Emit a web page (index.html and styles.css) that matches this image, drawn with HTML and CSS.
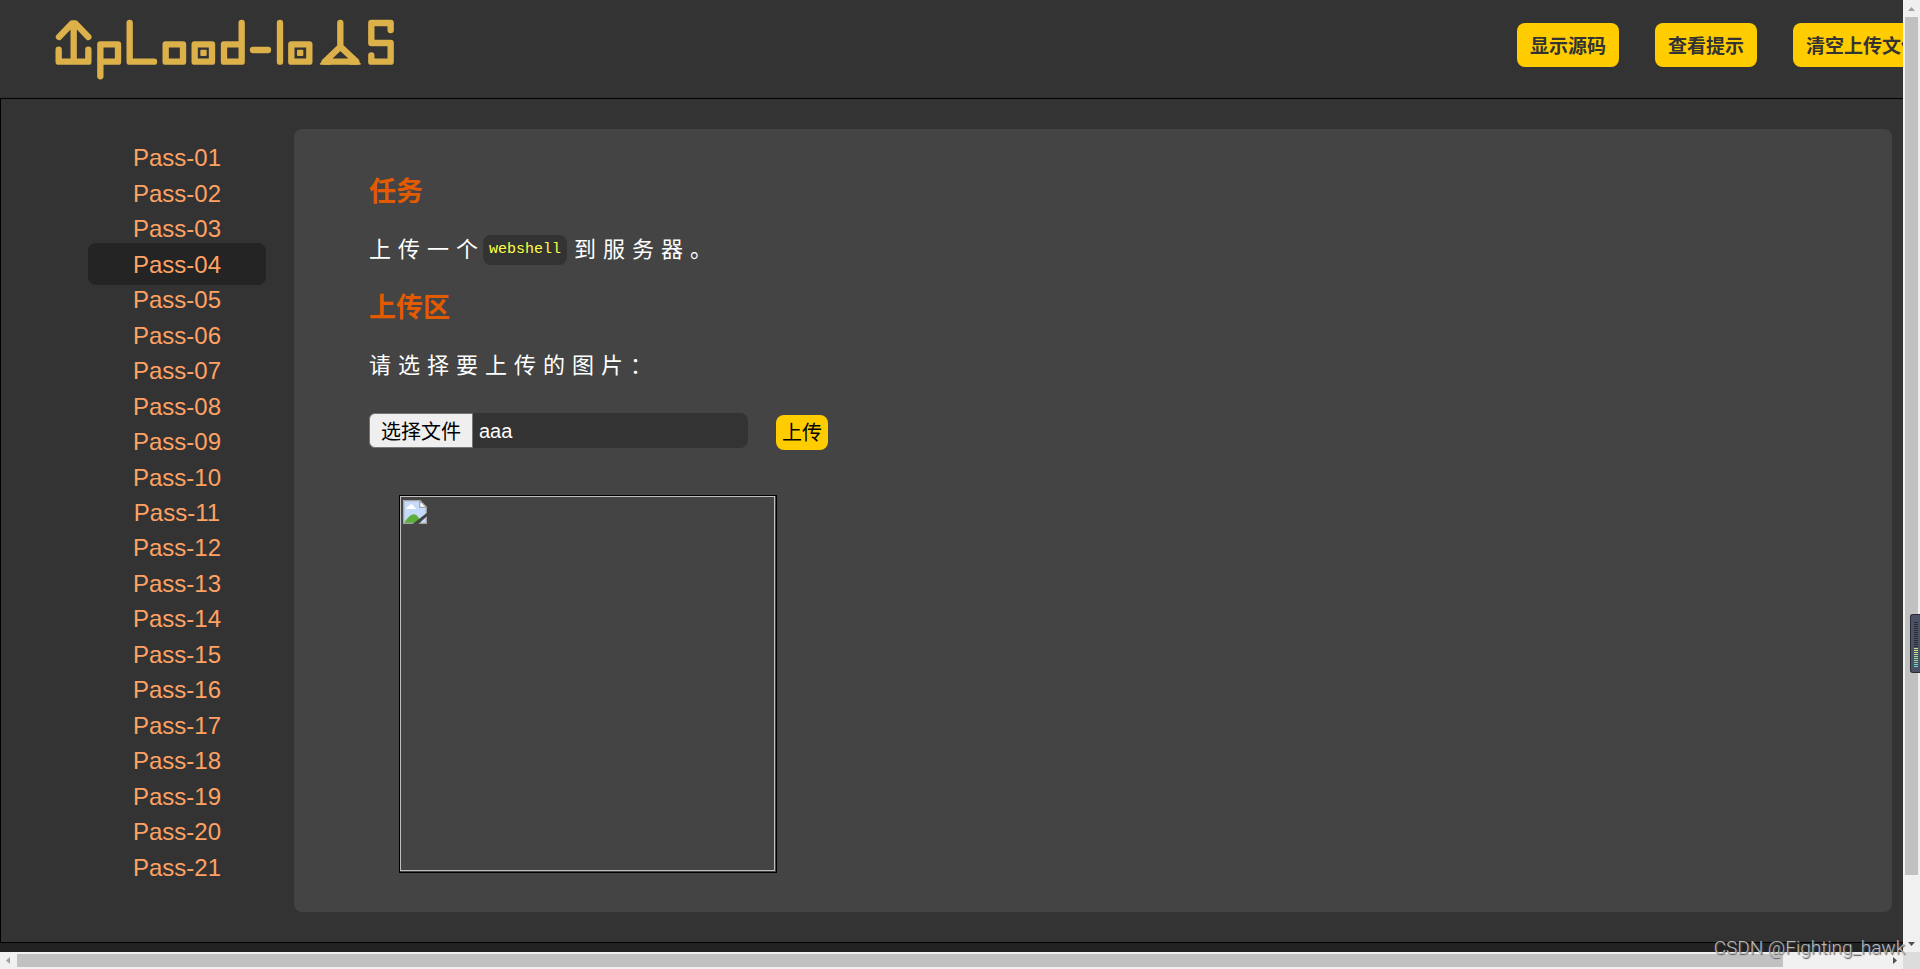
FILE: index.html
```html
<!DOCTYPE html>
<html lang="zh-CN">
<head>
<meta charset="utf-8">
<title>upload-labs</title>
<link rel="stylesheet" href="styles.css">
</head>
<body>
<div class="page">
  <header class="header">
    <svg class="logo" viewBox="46 58 1020 184" role="img" aria-label="upload-labs">
      <g fill="none" stroke="#dcb14a" stroke-width="19" stroke-linecap="round" stroke-linejoin="round">
        <path d="M57 150V186H146V150M102 72V186M58 112L97 71H107L146 112"/>
        <path d="M182 230V134H235V186H182"/>
        <path d="M270 70V186H343"/>
        <path d="M378 134H430V186H378Z"/>
        <path d="M465 134H517V186H465Z"/>
        <path d="M606 70V186H553V134H606"/>
        <path d="M640 151H685"/>
        <path d="M721 70V186"/>
        <path d="M755 134H809V186H755Z"/>
        <path d="M902 70V141L855 186H950L902 141"/>
        <path d="M1053 91V70H995V130H1053V186H995V167"/>
      </g>
      <g fill="#dcb14a"><rect x="482" y="150" width="19" height="19" rx="3"/><rect x="772" y="150" width="19" height="19" rx="3"/><path d="M840 192L866 167L875 195H842ZM964 192L938 167L929 195H962Z"/></g>
    </svg>
    <nav class="actions">
      <button type="button">显示源码</button>
      <button type="button">查看提示</button>
      <button type="button">清空上传文件</button>
    </nav>
  </header>
  <main class="main">
    <nav class="menu">
      <a href="#1">Pass-01</a><a href="#2">Pass-02</a><a href="#3">Pass-03</a>
      <a href="#4" class="current" aria-current="page">Pass-04</a><a href="#5">Pass-05</a><a href="#6">Pass-06</a>
      <a href="#7">Pass-07</a><a href="#8">Pass-08</a><a href="#9">Pass-09</a>
      <a href="#10">Pass-10</a><a href="#11">Pass-11</a><a href="#12">Pass-12</a>
      <a href="#13">Pass-13</a><a href="#14">Pass-14</a><a href="#15">Pass-15</a>
      <a href="#16">Pass-16</a><a href="#17">Pass-17</a><a href="#18">Pass-18</a>
      <a href="#19">Pass-19</a><a href="#20">Pass-20</a><a href="#21">Pass-21</a>
    </nav>
    <section class="panel">
      <h3>任务</h3>
      <p>上传一个<code>webshell</code>到服务器。</p>
      <h3>上传区</h3>
      <p>请选择要上传的图片：</p>
      <form class="upload">
        <div class="file">
          <label for="file">选择文件</label>
          <span>aaa</span>
          <input id="file" type="file">
        </div>
        <button type="button">上传</button>
      </form>
      <div class="preview" role="img" aria-label="上传的图片">
        <div class="preview-inner">
          <svg class="broken" viewBox="0 0 72 72">
            <path fill="#c6dafa" d="M3 3H50L69 22V69H3Z"/>
            <path fill="#fff" d="M10 26q1-8 8-8q4-8 11-4q5 3 5 8q5 0 5 5H10Z"/>
            <path fill="#5bb03a" d="M3 69Q20 42 34 43Q46 45 54 69Z"/>
            <path fill="#fff" d="M50 3V22H69Z"/>
            <path fill="none" stroke="#a5a5a5" stroke-width="4" d="M2 2H51L70 21V70H2ZM50 2V22H70"/>
            <path fill="#444" d="M72 38V49L46 72H29Z"/>
          </svg>
        </div>
      </div>
    </section>
  </main>
</div>
<div class="vscroll">
  <svg viewBox="0 0 17 17"><path fill="#a0a0a0" d="M5 11H12L8.500 7Z"/></svg>
  <div class="vtrack"><div class="vthumb"></div></div>
  <svg viewBox="0 0 17 17"><path fill="#505050" d="M5 7H12L8.500 11Z"/></svg>
</div>
<div class="hscroll">
  <svg viewBox="0 0 17 17"><path fill="#a0a0a0" d="M10 5V12L6 8.500Z"/></svg>
  <div class="htrack"><div class="hthumb"></div></div>
  <svg viewBox="0 0 17 17"><path fill="#505050" d="M7 5V12L11 8.500Z"/></svg>
</div>
<div class="corner"></div>
<div class="meter"><div class="meter-off"></div><div class="meter-on"></div></div>
<div class="watermark">CSDN @Fighting_hawk</div>
</body>
</html>
```

FILE: styles.css
```css
* { box-sizing: border-box; }
html { height: 100%; overflow: hidden; }
body {
  position: relative;
  margin: 0;
  height: 100%;
  display: grid;
  grid-template-columns: minmax(0, 1fr) 17px;
  grid-template-rows: minmax(0, 1fr) 17px;
  overflow: hidden;
  background: #222;
  color: #fff;
  font-family: "Liberation Sans", "Noto Sans CJK SC", sans-serif;
}
button { border: 0; background: #fc0; border-radius: 8px; font-family: inherit; white-space: nowrap; }
.page { display: flex; flex-direction: column; overflow: hidden; padding-bottom: 9px; }
.header { flex: none; display: flex; align-items: flex-start; height: 98px; padding-left: 55px; background: #333; }
.logo { flex: none; width: 340px; margin-top: 19px; }
.actions { display: flex; gap: 36px; margin: 23px -30px 0 auto; }
.actions button { flex: none; height: 44px; padding: 0 13px 2px; color: #333; font-size: 19px; font-weight: bold; }

.main { flex: 1; display: flex; padding: 30px 11px 30px 0; border: solid #000; border-width: 1px 0 1px 1px; background: #333; }
.menu { flex: none; width: 293px; display: grid; grid-auto-rows: 1fr; padding: 11px 28px 27px 87px; }
.menu a { display: flex; align-items: center; justify-content: center; height: 42px; align-self: center; margin: -4px 0; padding-top: 1px; border-radius: 8px; color: #ffa263; font-size: 24px; text-decoration: none; }
.menu .current { background: #242424; }

.panel { flex: 1; padding: 43px 75px 0; border-radius: 8px; background: #444; }
.panel h3 { margin: 0 0 18px; color: #e35b00; font-size: 27px; line-height: 40px; }
.panel p { margin: 0 0 18px; font-size: 22px; line-height: 40px; letter-spacing: 7px; }
.panel code { display: inline-block; height: 30px; margin: -2px 7px 0 -2px; padding: 0 6px; border-radius: 8px; background: #333; color: #ff4; font: 15px/30px "Liberation Mono", monospace; letter-spacing: 0; vertical-align: middle; }
.upload { display: flex; align-items: flex-end; gap: 28px; margin-top: 27px; font-size: 20px; }
.upload button { height: 35px; padding: 0 6px 2px; color: #000; font-size: 20px; }
.file { position: relative; display: flex; gap: 6px; width: 379px; height: 35px; margin-bottom: 2px; border-radius: 8px; background: #333; line-height: 36px; }
.file label { height: 35px; padding: 0 11px; border: 1px solid #767676; border-radius: 6px 0 0 6px; background: #efefef; color: #000; }
.file input { position: absolute; inset: 0; width: 100%; opacity: 0; }
.preview { width: 378px; height: 378px; margin: 45px 30px 0; padding: 0 1px 1px 0; border: 1px solid #000; }
.preview-inner { height: 100%; padding: 3px 2px; border: 1px solid #c0c0c0; }
.broken { display: block; width: 24px; height: 24px; }

.vscroll, .hscroll { display: flex; background: #f0f0f0; }
.vscroll { flex-direction: column; }
.vscroll svg, .hscroll svg { flex: none; width: 17px; height: 17px; }
.vtrack, .htrack { flex: 1; }
.vthumb { width: 13px; height: 93.5%; margin-left: 2px; background: #c1c1c1; }
.hthumb { width: 94.5%; height: 13px; margin-top: 2px; background: #c1c1c1; }
.corner { background: #dcdcdc; }
.meter { position: absolute; top: 614px; right: 0; width: 10px; height: 59px; padding: 7px 2px 6px 3px; border: 1px solid #292b35; border-right: 0; border-radius: 3px 0 0 3px; background: #4c5266; }
.meter-off { height: 26px; background: repeating-linear-gradient(#292b35 0 1px, transparent 1px 2px); }
.meter-on { height: 20px; background: repeating-linear-gradient(transparent 0 1px, #4c5266 1px 2px), linear-gradient(#d5e87c, #60d8c8); }
.watermark { position: absolute; right: 15px; bottom: 9px; color: #bbb; font: 300 19px/24px Roboto, sans-serif; text-shadow: 1px 1px 1px #555; }
```
